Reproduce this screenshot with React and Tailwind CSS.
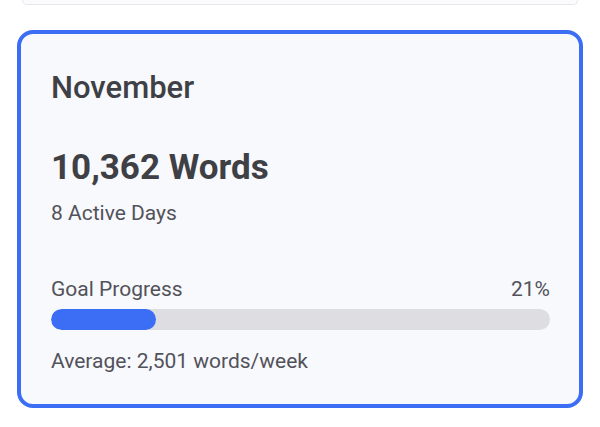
export default function App() {
  return (
    <div className="w-[600px] h-[427px] bg-white overflow-hidden" style={{ fontFamily: "Roboto, 'Noto Sans', sans-serif" }}>
      <div className="mx-[22px] h-[5px] border-x border-b border-[#e6e7ec] rounded-b-[12px] bg-[#fbfbfd]" />
      <div className="mx-[17px] mt-[25px] border-4 border-[#3b6ef5] rounded-[16px] bg-[#f8f9fc] pl-[30px] pr-[29px] pt-[36px] pb-[29px] text-[#3f3f46]">
        <div className="text-[31px] font-medium leading-[36px]">November</div>
        <div className="mt-[41px] text-[35px] font-bold leading-[42px]">10,362 Words</div>
        <div className="mt-[10px] text-[21px] leading-[28px] text-[#52525b]">8 Active Days</div>
        <div className="mt-[48px] flex justify-between text-[21px] leading-[28px] text-[#52525b]">
          <span>Goal Progress</span>
          <span>21%</span>
        </div>
        <div className="mt-[6px] h-[21px] rounded-full bg-[#dedee2] overflow-hidden">
          <div className="h-full rounded-full bg-[#3b6ef5]" style={{ width: "21%" }} />
        </div>
        <div className="mt-[17px] text-[21px] leading-[28px] text-[#52525b]">Average: 2,501 words/week</div>
      </div>
    </div>
  );
}
